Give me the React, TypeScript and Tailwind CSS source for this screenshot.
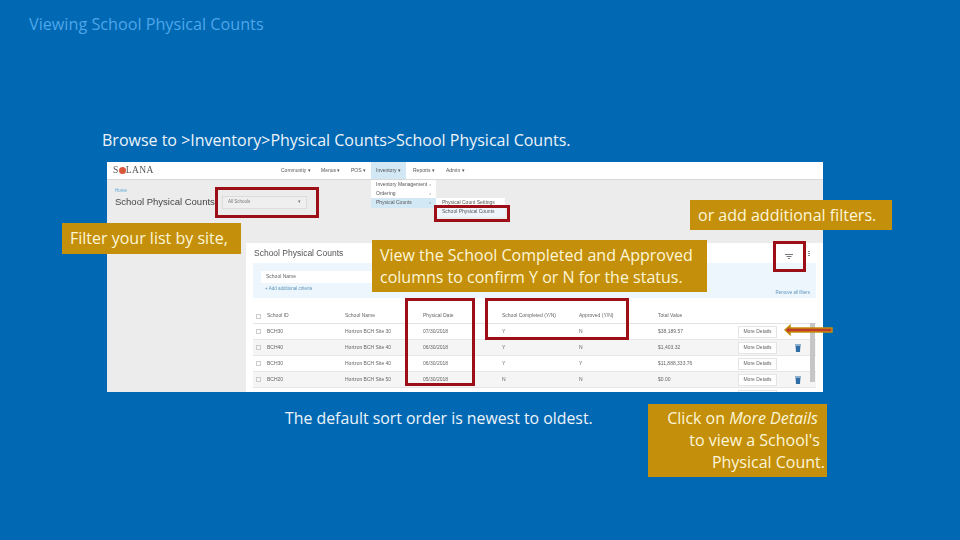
import React from 'react';

const rows = [
    { id: 'BCH30', name: 'Horizon BCH Site 30', date: '07/30/2018', done: 'Y', ok: 'N', total: '$38,189.57', trash: false },
    { id: 'BCH40', name: 'Horizon BCH Site 40', date: '06/30/2018', done: 'Y', ok: 'N', total: '$1,403.32', trash: true },
    { id: 'BCH30', name: 'Horizon BCH Site 40', date: '06/30/2018', done: 'Y', ok: 'Y', total: '$11,888,333.76', trash: false },
    { id: 'BCH20', name: 'Horizon BCH Site 50', date: '05/30/2018', done: 'N', ok: 'N', total: '$0.00', trash: true },
    { id: '', name: '', date: '', done: '', ok: '', total: '', trash: true },
];

const navItems = ['Community', 'Menus', 'POS', 'Inventory', 'Reports', 'Admin'];

function Trash() {
    return (
        <svg width="6" height="8" viewBox="0 0 6 8" className="ml-[18px] shrink-0">
            <path d="M0 0.6h6v1H0zM0.6 2h4.8l-0.4 6H1z" fill="#2f6ea5" />
        </svg>
    );
}

function RedBox({ className }: { className: string }) {
    return <div className={`absolute border-[3px] border-[#9c0f16] ${className}`} />;
}

function Callout({ className, children }: { className: string; children: React.ReactNode }) {
    return <div className={`absolute bg-[#c48f0b] text-[#fdf6d8] text-[16px] leading-[22px] ${className}`}>{children}</div>;
}

export default function App() {
    return (
        <div className="relative w-[960px] h-[540px] overflow-hidden bg-[#0168b3] font-['Open_Sans',sans-serif]">
            <h1 className="pl-[29px] pt-[13px] text-[16.2px] leading-[22px] text-[#4da6ea]">Viewing School Physical Counts</h1>
            <p className="pl-[102px] pt-[94px] text-[16px] leading-[22px] text-[#eef4fa]">Browse to &gt;Inventory&gt;Physical Counts&gt;School Physical Counts.</p>

            {/* screenshot */}
            <div className="ml-[107px] mt-[11px] w-[716px] h-[230px] flex flex-col overflow-hidden bg-[#ececec] font-['Liberation_Sans',sans-serif] blur-[0.4px]">
                <div className="h-[18px] shrink-0 flex items-center bg-white border-b border-[#d8d8d8] pl-[6px]">
                    <div className="w-[168px] flex items-center font-['Liberation_Serif',serif] text-[9.5px] text-[#555] tracking-[0.4px]">
                        S<span className="inline-block w-[7px] h-[7px] rounded-full bg-[#d9583a]" />LANA
                    </div>
                    <div className="flex items-center text-[5px] text-[#555]">
                        {navItems.map((n, i) => (
                            <span key={n} className={i === 3 ? 'w-[35px] mr-[7px] pl-[5px] h-[17px] flex items-center bg-[#d3e8f5]' : i === 0 ? 'w-[40px]' : i === 1 ? 'w-[30px]' : i === 2 ? 'w-[20px]' : i === 4 ? 'w-[33px]' : 'w-[30px]'}>
                                {n} ▾
                            </span>
                        ))}
                    </div>
                </div>

                <div className="flex-1 min-h-0 flex flex-col pl-[8px]">
                    <span className="pt-[8px] text-[4.5px] leading-[6px] text-[#5aa7d8]">Home</span>
                    <div className="flex items-center mt-[1px]">
                        <span className="w-[107px] text-[9.5px] leading-[14px] text-[#444]">School Physical Counts</span>
                        <div className="w-[85px] h-[13px] flex items-center justify-between px-[5px] border border-[#dcdcdc] bg-[#efefef] text-[4.5px] text-[#777]">
                            <span>All Schools</span>
                            <span>▾</span>
                        </div>
                    </div>

                    {/* card */}
                    <div className="ml-[131px] mt-[34px] flex-1 min-h-0 bg-white overflow-hidden pl-[7px]">
                        <div className="h-[20px] flex items-center justify-between pr-[13px] text-[8.5px] text-[#555]">
                            <span className="pl-[1px]">School Physical Counts</span>
                            <span className="flex flex-col gap-[1px]">
                                <span className="w-[2px] h-[1px] bg-[#888]" />
                                <span className="w-[2px] h-[1px] bg-[#888]" />
                                <span className="w-[2px] h-[1px] bg-[#888]" />
                            </span>
                        </div>
                        <div className="relative w-[563px] h-[35px] bg-[#edf6fc] pl-[8px] pt-[8px]">
                            <div className="w-[200px] h-[12px] flex items-center pl-[5px] bg-white text-[5px] text-[#666]">School Name</div>
                            <p className="pl-[4px] pt-[2px] text-[4.5px] leading-[8px] text-[#5f95bd]">+ Add additional criteria</p>
                            <span className="absolute right-[6px] bottom-[1px] text-[4.5px] text-[#5f95bd]">Remove all filters</span>
                        </div>
                        <div className="relative w-[563px]">
                            <div className="grid grid-cols-[14px_78px_78px_79px_77px_79px_80px_78px] items-center h-[26px] pt-[11px] text-[5px] text-[#666] border-b border-[#e2e2e2]">
                                <span className="w-[5px] h-[5px] ml-[3px] border border-[#ccc]" />
                                <span>School ID</span>
                                <span>School Name</span>
                                <span>Physical Date</span>
                                <span>School Completed (Y/N)</span>
                                <span>Approved (Y/N)</span>
                                <span>Total Value</span>
                                <span />
                            </div>
                            {rows.map((r, i) => (
                                <div key={i} className={`grid grid-cols-[14px_78px_78px_79px_77px_79px_80px_78px] items-center h-[16px] text-[5px] text-[#666] border-b border-[#e6e6e6] ${i % 2 === 1 ? 'bg-[#f5f5f5]' : 'bg-white'}`}>
                                    <span className={r.id ? 'w-[5px] h-[5px] ml-[3px] border border-[#ccc]' : ''} />
                                    <span>{r.id}</span>
                                    <span>{r.name}</span>
                                    <span>{r.date}</span>
                                    <span>{r.done}</span>
                                    <span>{r.ok}</span>
                                    <span>{r.total}</span>
                                    <span className="flex items-center">
                                        <span className="w-[39px] h-[12px] shrink-0 flex items-center justify-center bg-white border border-[#e4e4e4] text-[#666]">{r.id ? 'More Details' : ''}</span>
                                        {r.trash && <Trash />}
                                    </span>
                                </div>
                            ))}
                            <div className="absolute left-[557px] top-[25px] w-[5px] h-[59px] bg-[#c6c6c6]" />
                        </div>
                    </div>
                </div>
            </div>

            <p className="pl-[285px] pt-[15px] text-[15.85px] leading-[22px] text-[#eef4fa]">The default sort order is newest to oldest.</p>

            {/* inventory dropdown */}
            <div className="absolute left-[371px] top-[180px] w-[65px] h-[28px] flex flex-col bg-white text-[5px] text-[#555] font-['Liberation_Sans',sans-serif] blur-[0.4px]">
                <span className="h-[9px] px-[5px] flex items-center justify-between">Inventory Management <i>›</i></span>
                <span className="h-[9px] px-[5px] flex items-center justify-between">Ordering <i>›</i></span>
                <span className="h-[10px] px-[5px] flex items-center justify-between bg-[#d3e8f5]">Physical Counts <i>›</i></span>
            </div>
            <div className="absolute left-[436px] top-[198px] w-[69px] h-[19px] flex flex-col bg-white text-[5px] text-[#555] font-['Liberation_Sans',sans-serif] blur-[0.4px]">
                <span className="h-[9px] px-[6px] flex items-center">Physical Count Settings</span>
                <span className="h-[10px] px-[6px] flex items-center bg-[#eef6fb]">School Physical Counts</span>
            </div>

            {/* filter icon */}
            <svg width="8" height="5" viewBox="0 0 8 5" className="absolute left-[785px] top-[254px]">
                <path d="M0 0h8v1H0zM1.5 2h5v1h-5zM3 4h2v1H3z" fill="#777" />
            </svg>

            <RedBox className="left-[215px] top-[187px] w-[104px] h-[31px]" />
            <RedBox className="left-[434px] top-[205px] w-[76px] h-[17px]" />
            <RedBox className="left-[773px] top-[241px] w-[33px] h-[31px]" />
            <RedBox className="left-[405px] top-[298px] w-[70px] h-[88px]" />
            <RedBox className="left-[485px] top-[298px] w-[144px] h-[42px]" />

            {/* arrow */}
            <svg width="50" height="12" viewBox="0 0 50 12" className="absolute left-[784px] top-[324px]">
                <path d="M1 6 L6 1.5 V4 H48 V8 H6 V10.5 Z" fill="#c0392b" stroke="#c48f0b" strokeWidth="1.5" />
            </svg>

            <Callout className="left-[62px] top-[223px] w-[179px] h-[31px] pl-[8px] pt-[4px]">Filter your list by site,</Callout>
            <Callout className="left-[690px] top-[200px] w-[202px] h-[30px] pl-[8px] pt-[4px]">or add additional filters.</Callout>
            <Callout className="left-[372px] top-[240px] w-[335px] h-[52px] pl-[8px] pt-[4px]">
                View the School Completed and Approved<br />columns to confirm Y or N for the status.
            </Callout>
            <Callout className="left-[648px] top-[404px] w-[179px] h-[73px] pr-[2px] pt-[3px] text-right">
                <span className="pr-[7px]">Click on <em>More Details</em></span><br />
                <span className="pr-[5px]">to view a School's</span><br />Physical Count.
            </Callout>
        </div>
    );
}
